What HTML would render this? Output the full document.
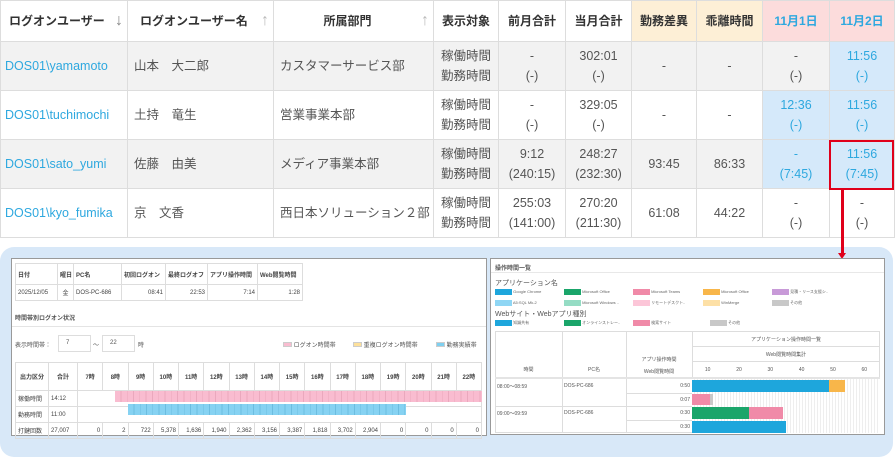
<!DOCTYPE html>
<html><head><meta charset="utf-8">
<style>
*{margin:0;padding:0;box-sizing:border-box}
body{width:895px;height:447px;background:#fff;position:relative;overflow:hidden;font-family:"Liberation Sans","Noto Sans CJK JP",sans-serif;color:#444}
.a{position:absolute}
table{border-collapse:collapse}
#top{position:absolute;left:0;top:0;width:894px;border:1px solid #999;table-layout:fixed;font-size:12.5px}
#top td,#top th{border:1px solid #ddd;text-align:center;line-height:20px;color:#555}
#top th{height:41px;font-weight:bold;color:#333;font-size:12px}
#top td{height:49px}
#top tr.g td{background:#f2f2f2}
#top td.lk{color:#2ea8df;text-align:left;padding-left:4px;font-size:12.5px}
.l{text-align:left!important;padding-left:6px}
#top td.b{background:#d5e9fa!important;color:#2ea8df}
.y{background:#fdefd6}
#top th.p{background:#fcdcdc;color:#2ea8df}
.ar{color:#bbb;font-weight:normal;float:right;margin-right:4px;font-size:16px}
.sm{font-size:6px;color:#555}
.st td{border:1px solid #ddd;height:16px;padding:0 2px;font-size:6px;white-space:nowrap}
</style></head><body>
<table id="top">
<colgroup><col style="width:127px"><col style="width:146px"><col style="width:160px"><col style="width:65px"><col style="width:67px"><col style="width:66px"><col style="width:65px"><col style="width:66px"><col style="width:67px"><col style="width:65px"></colgroup>
<tr><th style="text-align:left;padding-left:8px">ログオンユーザー <span class="ar" style="color:#888">↓</span></th><th style="text-align:left;padding-left:12px">ログオンユーザー名<span class="ar">↑</span></th><th>所属部門<span class="ar">↑</span></th><th>表示対象</th><th>前月合計</th><th>当月合計</th><th class="y">勤務差異</th><th class="y">乖離時間</th><th class="p">11月1日</th><th class="p">11月2日</th></tr>
<tr class="g"><td class="lk">DOS01\yamamoto</td><td class="l">山本　大二郎</td><td class="l">カスタマーサービス部</td><td>稼働時間<br>勤務時間</td><td>-<br>(-)</td><td>302:01<br>(-)</td><td>-</td><td>-</td><td>-<br>(-)</td><td class="b">11:56<br>(-)</td></tr>
<tr><td class="lk">DOS01\tuchimochi</td><td class="l">土持　竜生</td><td class="l">営業事業本部</td><td>稼働時間<br>勤務時間</td><td>-<br>(-)</td><td>329:05<br>(-)</td><td>-</td><td>-</td><td class="b">12:36<br>(-)</td><td class="b">11:56<br>(-)</td></tr>
<tr class="g"><td class="lk">DOS01\sato_yumi</td><td class="l">佐藤　由美</td><td class="l">メディア事業本部</td><td>稼働時間<br>勤務時間</td><td>9:12<br>(240:15)</td><td>248:27<br>(232:30)</td><td>93:45</td><td>86:33</td><td class="b">-<br>(7:45)</td><td class="b">11:56<br>(7:45)</td></tr>
<tr><td class="lk">DOS01\kyo_fumika</td><td class="l">京　文香</td><td class="l">西日本ソリューション２部</td><td>稼働時間<br>勤務時間</td><td>255:03<br>(141:00)</td><td>270:20<br>(211:30)</td><td>61:08</td><td>44:22</td><td>-<br>(-)</td><td>-<br>(-)</td></tr>
</table>
<div class="a" style="left:829px;top:140px;width:65px;height:50px;border:2px solid #e0001a"></div>
<div class="a" style="left:0;top:247px;width:893px;height:210px;background:#d8e8f8;border-radius:14px"></div>
<div class="a" style="left:841px;top:190px;width:3px;height:64px;background:#e0001a"></div>
<div class="a" style="left:838px;top:253px;width:0;height:0;border-left:4.5px solid transparent;border-right:4.5px solid transparent;border-top:6px solid #e0001a"></div>

<!-- left panel -->
<div class="a" style="left:11px;top:258px;width:476px;height:178px;background:#fff;border:1px solid #999"></div>
<table class="a st" style="left:15px;top:263px;width:287px;table-layout:fixed">
<colgroup><col style="width:42px"><col style="width:16px"><col style="width:48px"><col style="width:44px"><col style="width:42px"><col style="width:50px"><col style="width:45px"></colgroup>
<tr style="font-weight:bold"><td style="height:21px">日付</td><td>曜日</td><td>PC名</td><td>初回ログオン</td><td>最終ログオフ</td><td>アプリ操作時間</td><td>Web閲覧時間</td></tr>
<tr><td>2025/12/05</td><td style="text-align:center">金</td><td>DOS-PC-686</td><td style="text-align:right">08:41</td><td style="text-align:right">22:53</td><td style="text-align:right">7:14</td><td style="text-align:right">1:28</td></tr>
</table>
<div class="a sm" style="left:15px;top:313px;font-weight:bold">時間帯別ログオン状況</div>
<div class="a" style="left:12px;top:326px;width:474px;height:1px;background:#e4e4e4"></div>
<div class="a sm" style="left:15px;top:340px">表示時間帯：</div>
<div class="a sm" style="left:58px;top:335px;width:33px;height:17px;border:1px solid #ddd;padding:4px 7px">7</div>
<div class="a sm" style="left:93px;top:340px">～</div>
<div class="a sm" style="left:102px;top:335px;width:33px;height:17px;border:1px solid #ddd;padding:4px 7px">22</div>
<div class="a sm" style="left:138px;top:340px">時</div>
<div class="a sm" style="left:283px;top:340px"><span style="display:inline-block;width:9px;height:5px;background:#f9bcd0;border:1px solid #ccc"></span> ログオン時間帯</div>
<div class="a sm" style="left:353px;top:340px"><span style="display:inline-block;width:9px;height:5px;background:#fde09a;border:1px solid #ccc"></span> 重複ログオン時間帯</div>
<div class="a sm" style="left:436px;top:340px"><span style="display:inline-block;width:9px;height:5px;background:#7fd0f0;border:1px solid #ccc"></span> 勤務実績帯</div>
<table class="a st" style="left:15px;top:362px;width:467px;table-layout:fixed">
<colgroup><col style="width:33px"><col style="width:29px"><col span="16"></colgroup>
<tr style="font-weight:bold;text-align:center"><td style="height:28px;text-align:center">出力区分</td><td style="text-align:center">合計</td><td style="text-align:center">7時</td><td style="text-align:center">8時</td><td style="text-align:center">9時</td><td style="text-align:center">10時</td><td style="text-align:center">11時</td><td style="text-align:center">12時</td><td style="text-align:center">13時</td><td style="text-align:center">14時</td><td style="text-align:center">15時</td><td style="text-align:center">16時</td><td style="text-align:center">17時</td><td style="text-align:center">18時</td><td style="text-align:center">19時</td><td style="text-align:center">20時</td><td style="text-align:center">21時</td><td style="text-align:center">22時</td></tr>
<tr><td style="height:13px">稼働時間</td><td>14:12</td><td colspan="16" style="padding:0"></td></tr>
<tr><td style="height:14px">勤務時間</td><td>11:00</td><td colspan="16" style="padding:0"></td></tr>
<tr style="text-align:right"><td style="height:14px;text-align:left">打鍵回数</td><td style="text-align:left">27,007</td><td>0</td><td>2</td><td>722</td><td>5,378</td><td>1,636</td><td>1,940</td><td>2,362</td><td>3,156</td><td>3,387</td><td>1,818</td><td>3,702</td><td>2,904</td><td>0</td><td>0</td><td>0</td><td>0</td></tr>
</table>
<div class="a" style="left:115px;top:391px;width:367px;height:11px;background:repeating-linear-gradient(90deg,#f9bcd0 0 5.5px,#eaa8bd 5.5px 6.3px)"></div>
<div class="a" style="left:128px;top:404px;width:278px;height:11px;background:repeating-linear-gradient(90deg,#86d2f2 0 5.5px,#6cbde0 5.5px 6.3px)"></div>

<!-- right panel -->
<div class="a" style="left:490px;top:258px;width:395px;height:177px;background:#fff;border:1px solid #999"></div>
<div class="a sm" style="left:495px;top:263px;font-weight:bold">操作時間一覧</div>
<div class="a" style="left:491px;top:272px;width:393px;height:1px;background:#e8e8e8"></div>
<div class="a sm" style="left:495px;top:278px;font-size:7px">アプリケーション名</div>
<div class="a" style="left:495px;top:286px;font-size:4px;color:#666;line-height:11px;width:380px">
<div style="position:relative;height:11px">
<span class="a" style="left:0"><i style="display:inline-block;width:17px;height:6px;background:#1ea6dc;vertical-align:middle"></i> Google Chrome</span>
<span class="a" style="left:69px"><i style="display:inline-block;width:17px;height:6px;background:#1aa56a;vertical-align:middle"></i> Microsoft Office</span>
<span class="a" style="left:138px"><i style="display:inline-block;width:17px;height:6px;background:#f08aa8;vertical-align:middle"></i> Microsoft Teams</span>
<span class="a" style="left:208px"><i style="display:inline-block;width:17px;height:6px;background:#f8b64a;vertical-align:middle"></i> Microsoft Office</span>
<span class="a" style="left:277px"><i style="display:inline-block;width:17px;height:6px;background:#c89ad8;vertical-align:middle"></i> 見積・リース支援シ..</span>
</div>
<div style="position:relative;height:11px">
<span class="a" style="left:0"><i style="display:inline-block;width:17px;height:6px;background:#8fd6f4;vertical-align:middle"></i> A5:SQL Mk-2</span>
<span class="a" style="left:69px"><i style="display:inline-block;width:17px;height:6px;background:#95dcc4;vertical-align:middle"></i> Microsoft Windows ..</span>
<span class="a" style="left:138px"><i style="display:inline-block;width:17px;height:6px;background:#fcc6d8;vertical-align:middle"></i> リモートデスクト..</span>
<span class="a" style="left:208px"><i style="display:inline-block;width:17px;height:6px;background:#fde0a6;vertical-align:middle"></i> WinMerge</span>
<span class="a" style="left:277px"><i style="display:inline-block;width:17px;height:6px;background:#c8c8c8;vertical-align:middle"></i> その他</span>
</div></div>
<div class="a sm" style="left:495px;top:309px;font-size:7px">Webサイト・Webアプリ種別</div>
<div class="a" style="left:495px;top:317px;font-size:4px;color:#666;line-height:11px;width:380px;height:11px">
<span class="a" style="left:0"><i style="display:inline-block;width:17px;height:6px;background:#1ea6dc;vertical-align:middle"></i> 知識共有</span>
<span class="a" style="left:69px"><i style="display:inline-block;width:17px;height:6px;background:#1aa56a;vertical-align:middle"></i> オンラインストレー..</span>
<span class="a" style="left:138px"><i style="display:inline-block;width:17px;height:6px;background:#f08aa8;vertical-align:middle"></i> 検索サイト</span>
<span class="a" style="left:215px"><i style="display:inline-block;width:17px;height:6px;background:#c8c8c8;vertical-align:middle"></i> その他</span>
</div>
<div class="a" style="left:495px;top:331px;width:385px;height:102px;border:1px solid #ddd"></div>
<div class="a" style="left:562px;top:331px;width:1px;height:102px;background:#ddd"></div>
<div class="a" style="left:626px;top:331px;width:1px;height:102px;background:#ddd"></div>
<div class="a" style="left:692px;top:331px;width:1px;height:47px;background:#ddd"></div>
<div class="a" style="left:692px;top:346px;width:188px;height:1px;background:#ddd"></div>
<div class="a" style="left:692px;top:361px;width:188px;height:1px;background:#ddd"></div>
<div class="a" style="left:495px;top:377px;width:385px;height:2px;background:#e4e4e4"></div>
<div class="a" style="left:495px;top:406px;width:385px;height:1px;background:#ddd"></div>
<div class="a" style="left:626px;top:393px;width:254px;height:1px;background:#ddd"></div>
<div class="a" style="left:626px;top:420px;width:254px;height:1px;background:#ddd"></div>
<div class="a sm" style="left:692px;top:336px;width:188px;text-align:center;font-size:5px">アプリケーション操作時間一覧</div>
<div class="a sm" style="left:692px;top:351px;width:188px;text-align:center;font-size:5px">Web閲覧時間集計</div>
<div class="a sm" style="left:692px;top:367px;width:188px;display:flex;font-size:5px"><span style="flex:1;text-align:center">10</span><span style="flex:1;text-align:center">20</span><span style="flex:1;text-align:center">30</span><span style="flex:1;text-align:center">40</span><span style="flex:1;text-align:center">50</span><span style="flex:1;text-align:center">60</span></div>
<div class="a sm" style="left:495px;top:366px;width:67px;text-align:center;font-size:5px">時間</div>
<div class="a sm" style="left:562px;top:366px;width:64px;text-align:center;font-size:5px">PC名</div>
<div class="a sm" style="left:626px;top:354px;width:66px;text-align:center;font-size:5px;line-height:12px">アプリ操作時間<br>Web閲覧時間</div>
<div class="a sm" style="left:497px;top:383px;font-size:5px">08:00～08:59</div>
<div class="a sm" style="left:564px;top:383px;font-size:5px">DOS-PC-686</div>
<div class="a sm" style="left:497px;top:410px;font-size:5px">09:00～09:59</div>
<div class="a sm" style="left:564px;top:410px;font-size:5px">DOS-PC-686</div>
<div class="a sm" style="left:626px;top:383px;width:64px;text-align:right;font-size:5px">0:50</div>
<div class="a sm" style="left:626px;top:397px;width:64px;text-align:right;font-size:5px">0:07</div>
<div class="a sm" style="left:626px;top:410px;width:64px;text-align:right;font-size:5px">0:30</div>
<div class="a sm" style="left:626px;top:424px;width:64px;text-align:right;font-size:5px">0:30</div>
<div class="a" style="left:692px;top:379px;width:188px;height:54px;background:repeating-linear-gradient(90deg,#fff 0 2px,#eee 2px 3px)"></div>
<div class="a" style="left:692px;top:380px;width:137px;height:12px;background:#1ea6dc"></div>
<div class="a" style="left:829px;top:380px;width:16px;height:12px;background:#f8b64a"></div>
<div class="a" style="left:692px;top:394px;width:18px;height:11px;background:#f08aa8"></div>
<div class="a" style="left:710px;top:394px;width:3px;height:11px;background:#c8c8c8"></div>
<div class="a" style="left:692px;top:407px;width:57px;height:12px;background:#1aa56a"></div>
<div class="a" style="left:749px;top:407px;width:34px;height:12px;background:#f08aa8"></div>
<div class="a" style="left:692px;top:421px;width:94px;height:12px;background:#1ea6dc"></div>
</body></html>
